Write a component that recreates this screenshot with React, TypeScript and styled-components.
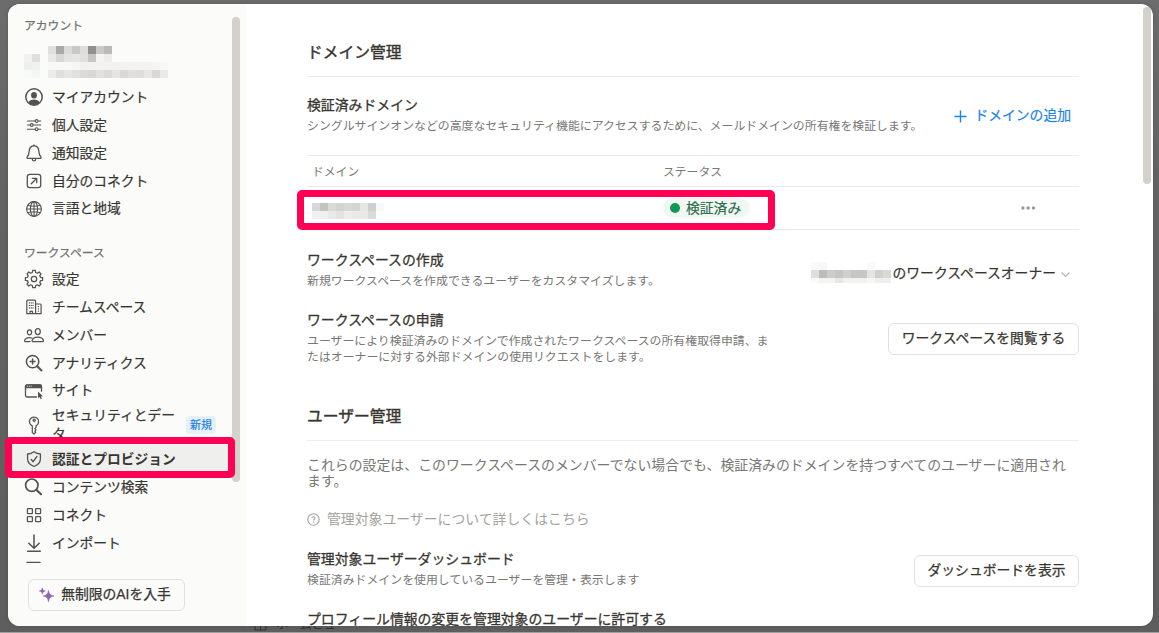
import React from 'react';
import styled, { createGlobalStyle } from 'styled-components';

const Global = createGlobalStyle`
  * { box-sizing: border-box; }
  html, body { margin: 0; height: 100%; overflow: hidden; }
  body {
    font-family: "Liberation Sans", "Noto Sans CJK JP", sans-serif;
    color: #37352f;
    background: #636363;
  }
  svg { display: block; flex: none; }
`;

const Backdrop = styled.div`
  position: relative;
  width: 1159px;
  height: 633px;
  padding: 4px 6px 6px 8px;
  overflow: hidden;
  background: linear-gradient(#6c6c6c, #636363 30%, #5e5e5e);
  border-bottom: 1px solid #a0a0a0;
`;

const Behind = styled.div`
  position: absolute;
  left: 254px;
  top: 617px;
  display: flex;
  align-items: center;
  gap: 9px;
  color: #333;
  font-size: 12px;
  line-height: 16px;
`;

const Modal = styled.div`
  position: relative;
  display: flex;
  width: 1145px;
  height: 622px;
  border-radius: 12px;
  background: #fff;
  overflow: hidden;
  box-shadow: 0 0 4px rgba(0, 0, 0, 0.15);
`;

const Sidebar = styled.aside`
  display: flex;
  flex: none;
  width: 238px;
  padding-left: 2px;
  background: #fbfbfa;
`;

const SideColumn = styled.div`
  display: flex;
  flex-direction: column;
  width: 222px;
`;

const SideScroll = styled.nav`
  display: flex;
  flex-direction: column;
  height: 559px;
  overflow: hidden;
`;

const SideHeading = styled.h2<{ $top: number }>`
  flex: none;
  margin: ${(p) => p.$top}px 0 0 14px;
  height: 18px;
  font-size: 11.8px;
  line-height: 18px;
  font-weight: 400;
  color: #73726e;
  -webkit-text-stroke: 0.25px currentColor;
`;

const Profile = styled.div`
  display: flex;
  flex: none;
  align-items: flex-end;
  gap: 8px;
  height: 43px;
  margin-left: 14px;
`;

const MosaicRow = styled.div`
  display: flex;
`;

const MosaicBlock = styled.div<{ $mt?: number }>`
  margin-top: ${(p) => p.$mt ?? 0}px;
`;

const Tile = styled.span<{ $c: string; $h?: number }>`
  width: 8px;
  height: ${(p) => p.$h ?? 8}px;
  background: ${(p) => p.$c};
`;

const Item = styled.a<{ $active?: boolean; $h?: number; $mt?: number }>`
  display: flex;
  flex: none;
  align-items: center;
  gap: 8px;
  height: ${(p) => p.$h ?? 27.9}px;
  margin-top: ${(p) => p.$mt ?? 0}px;
  padding-left: 14px;
  border-radius: 4px;
  background: ${(p) => (p.$active ? '#efefee' : 'transparent')};
  font-size: 13.75px;
  line-height: 19px;
  font-weight: ${(p) => (p.$active ? 700 : 400)};
  -webkit-text-stroke: ${(p) => (p.$active ? 0 : 0.2)}px currentColor;
`;

const IconBox = styled.span`
  display: flex;
  flex: none;
  width: 20px;
  height: 20px;
  align-items: center;
  justify-content: center;
  color: #55534e;
`;

const ItemLabel = styled.span<{ $wrap?: boolean }>`
  width: ${(p) => (p.$wrap ? '126px' : 'auto')};
  white-space: ${(p) => (p.$wrap ? 'pre-line' : 'nowrap')};
`;

const NewBadge = styled.span`
  width: 30px;
  height: 18px;
  border-radius: 4px;
  background: #e6effa;
  color: #1a83e2;
  font-size: 11px;
  line-height: 18px;
  text-align: center;
`;

const ThumbTrack = styled.div`
  padding-top: 12.5px;
`;

const Thumb = styled.div<{ $h: number }>`
  width: 8px;
  height: ${(p) => p.$h}px;
  border-radius: 4px;
  background: #d4d1cb;
`;

const Outline = styled.button<{ $w: number; $pr?: number; $mt?: number }>`
  display: flex;
  flex: none;
  align-items: center;
  justify-content: center;
  gap: 6px;
  width: ${(p) => p.$w}px;
  height: 32px;
  margin: ${(p) => p.$mt ?? 0}px 0 0;
  padding: 0 ${(p) => p.$pr ?? 0}px 0 0;
  border: 1px solid #e1e0de;
  border-radius: 6px;
  background: transparent;
  color: #37352f;
  font-family: inherit;
  font-size: 13.8px;
  line-height: 20px;
  white-space: nowrap;
  -webkit-text-stroke: 0.25px currentColor;
`;

const SideFooter = styled.div`
  padding: 16px 0 0 18px;
`;

const Main = styled.main`
  width: 772px;
  margin-left: 61px;
  flex: none;
`;

const SectionTitle = styled.h1<{ $top: number }>`
  margin: ${(p) => p.$top}px 0 0;
  height: 36px;
  border-bottom: 1px solid #ededec;
  font-size: 15.75px;
  line-height: 24px;
  font-weight: 400;
  -webkit-text-stroke: 0.4px currentColor;
`;

const Setting = styled.section<{ $top: number }>`
  display: flex;
  justify-content: space-between;
  align-items: center;
  margin-top: ${(p) => p.$top}px;
`;

const SettingTitle = styled.h3`
  margin: 0;
  font-size: 13.86px;
  line-height: 18px;
  font-weight: 400;
  white-space: nowrap;
  -webkit-text-stroke: 0.28px currentColor;
`;

const SettingNote = styled.p`
  margin: 4px 0 0;
  font-size: 11.9px;
  line-height: 16px;
  color: #787774;
  white-space: pre;
`;

const AddDomain = styled.button`
  display: flex;
  align-items: center;
  gap: 7px;
  padding: 2px 0 0;
  margin-right: 8px;
  border: 0;
  background: none;
  color: #1a84ea;
  font-family: inherit;
  font-size: 13.8px;
  line-height: 20px;
  white-space: nowrap;
  -webkit-text-stroke: 0.2px currentColor;
`;

const Table = styled.div`
  margin-top: 21px;
  border-top: 1px solid #ededec;
`;

const TableRow = styled.div<{ $h: number; $pb?: number }>`
  display: grid;
  grid-template-columns: 351px 356px 1fr;
  align-items: center;
  height: ${(p) => p.$h}px;
  padding: 0 0 ${(p) => p.$pb ?? 0}px 5px;
  border-bottom: 1px solid #e9e9e7;
  font-size: 11.8px;
  color: #787774;
`;

const Status = styled.span`
  display: flex;
  align-items: center;
  gap: 6px;
  width: 87px;
  height: 20px;
  padding-left: 7px;
  border-radius: 10px;
  background: #f1f8f4;
  color: #2f6b4c;
  font-size: 13.8px;
  line-height: 20px;
  -webkit-text-stroke: 0.2px currentColor;
`;

const StatusLabel = styled.span`
  padding-top: 1px;
`;

const Dot = styled.i`
  width: 10px;
  height: 10px;
  border-radius: 50%;
  background: #109a57;
`;

const Select = styled.div`
  display: flex;
  align-items: center;
  margin-right: 9px;
  padding-top: 7px;
  font-size: 13.8px;
  line-height: 20px;
  -webkit-text-stroke: 0.2px currentColor;
`;

const SelectLabel = styled.span`
  margin-left: 2px;
`;

const Paragraph = styled.p`
  margin: 16px 0 0;
  font-size: 13.9px;
  line-height: 16px;
  color: #787774;
  white-space: pre;
`;

const HelpLink = styled.a`
  display: flex;
  align-items: center;
  gap: 7px;
  margin-top: 20px;
  font-size: 13.86px;
  line-height: 20px;
  color: #a3a29f;
`;

const MainThumb = styled.div`
  margin: 3px 0 0 63.5px;
`;

const Marker = styled.div<{ $x: number; $y: number; $w: number; $h: number }>`
  position: absolute;
  left: ${(p) => p.$x}px;
  top: ${(p) => p.$y}px;
  width: ${(p) => p.$w}px;
  height: ${(p) => p.$h}px;
  border: 7px solid #ff0055;
  border-radius: 5px;
`;

const Svg = ({ children, size = 20, sw = 1.3 }: { children: React.ReactNode; size?: number; sw?: number }) => (
  <svg width={size} height={size} viewBox={`0 0 ${size} ${size}`} fill="none" stroke="currentColor" strokeWidth={sw} strokeLinecap="round" strokeLinejoin="round">
    {children}
  </svg>
);

const gearPath = (() => {
  const pts: string[] = [];
  const teeth = 8;
  for (let i = 0; i < teeth; i++) {
    const base = (i / teeth) * Math.PI * 2 - Math.PI / 2;
    [[-0.25, 6.7], [-0.15, 8.7], [0.15, 8.7], [0.25, 6.7]].forEach(([a, r]) => {
      pts.push(`${(10 + Math.cos(base + a) * r).toFixed(2)} ${(10 + Math.sin(base + a) * r).toFixed(2)}`);
    });
  }
  return `M${pts.join('L')}Z`;
})();

const icons: Record<string, React.ReactNode> = {
  account: (
    <Svg sw={1.5}>
      <circle cx="10" cy="10" r="8.2" />
      <ellipse cx="10" cy="8.2" rx="2.9" ry="3.3" fill="currentColor" stroke="none" />
      <path d="M4.4 15.3c1-1.9 3.2-2.7 5.6-2.7s4.6.8 5.6 2.7c-1.4 1.7-3.4 2.7-5.6 2.7s-4.2-1-5.6-2.7z" fill="currentColor" stroke="none" />
    </Svg>
  ),
  sliders: (
    <Svg sw={1.1}>
      <path d="M3.4 6h7.6M14.2 6h2.6M3.4 10h2.7M9.3 10h7.5M3.4 14.2h7.6M14.2 14.2h2.6" />
      <circle cx="12.6" cy="6" r="1.4" />
      <circle cx="7.7" cy="10" r="1.4" />
      <circle cx="12.6" cy="14.2" r="1.4" />
    </Svg>
  ),
  bell: (
    <Svg>
      <path d="M10 2.8c-3.2 0-4.7 2.3-4.8 5.3-.1 3.4-.9 4.6-2.1 6.1-.4.6-.1 1.2.6 1.2h12.6c.7 0 1-.6.6-1.2-1.2-1.5-2-2.7-2.1-6.1-.1-3-1.6-5.3-4.8-5.3z" />
      <path d="M8.3 16.2c.1 1 .8 1.6 1.7 1.6s1.6-.6 1.7-1.6M10 1.9v.6" />
    </Svg>
  ),
  connect: (
    <Svg>
      <rect x="3.3" y="3.3" width="13.4" height="13.4" rx="2.4" />
      <path d="M7.3 12.7l5.2-5.2M8.3 7.3h4.4v4.4" />
    </Svg>
  ),
  globe: (
    <Svg sw={1.1}>
      <circle cx="10" cy="10" r="7.4" />
      <ellipse cx="10" cy="10" rx="3.6" ry="7.4" />
      <path d="M10 2.6v14.8M2.6 10h14.8M3.8 6.3c3.4 1 9 1 12.4 0M3.8 13.7c3.4-1 9-1 12.4 0" />
    </Svg>
  ),
  gear: (
    <Svg>
      <path d={gearPath} />
      <circle cx="10" cy="10" r="2.7" />
    </Svg>
  ),
  building: (
    <Svg sw={1.2}>
      <path d="M2.8 16.7V4.2c0-.6.4-1 1-1h6.8c.6 0 1 .4 1 1v12.5zM11.6 7h4.6c.5 0 .9.4.9.9v8.8h-5.5M6 16.5v-2.2h2.5v2.2" />
      <path d="M5.4 5.9h.2M7.2 5.9h.2M9 5.9h.2M5.4 8.4h.2M7.2 8.4h.2M9 8.4h.2M5.4 10.9h.2M7.2 10.9h.2M9 10.9h.2M14.3 9.6h.2M14.3 11.9h.2M14.3 14.2h.2" />
    </Svg>
  ),
  people: (
    <Svg sw={1.25}>
      <ellipse cx="13.8" cy="6.6" rx="2.5" ry="3" />
      <path d="M8.7 16.5c-.5 0-.7-.4-.6-.9.5-2.2 2.9-3.6 5.7-3.6s5.2 1.4 5.7 3.6c.1.5-.1.9-.6.9z" />
      <ellipse cx="5.5" cy="7.3" rx="2.1" ry="2.5" />
      <path d="M6 16.5H1.1c-.4 0-.6-.4-.5-.8.4-1.9 2.4-3.2 4.9-3.2.9 0 1.7.2 2.4.5" />
    </Svg>
  ),
  analytics: (
    <Svg sw={1.5}>
      <circle cx="8.6" cy="8.6" r="6.2" />
      <path d="M8.6 6.1v5M6.1 8.6h5" />
      <path d="M13.3 13.3l4.2 4.2" strokeWidth="2" />
    </Svg>
  ),
  site: (
    <Svg>
      <path d="M12.5 16H3.2c-1 0-1.7-.7-1.7-1.7V5.7c0-1 .7-1.7 1.7-1.7h12.6c1 0 1.7.7 1.7 1.7v4.5" />
      <path d="M1.5 5.7C1.5 4.7 2.2 4 3.2 4h12.6c1 0 1.7.7 1.7 1.7v.9h-16z" fill="currentColor" />
      <path d="M3.3 5.2h.1M5.2 5.2h.1M7.1 5.2h.1" stroke="#fff" strokeWidth="1" />
      <path d="M14 10.5v6.8l1.6-1.4 1 2.2 1.3-.6-1-2.1 2.1-.2z" fill="currentColor" stroke="none" />
    </Svg>
  ),
  key: (
    <Svg sw={1.25}>
      <path d="M8.3 10.9a4.6 4.6 0 1 1 3.7-.1v1.5l-1.2 1.3 1.2 1.3-1.1 1.3.8 1.1-1.7 1.8-1.7-1.6z" />
      <circle cx="10.2" cy="5.2" r="1.1" />
    </Svg>
  ),
  shield: (
    <Svg>
      <path d="M10 2.7c1.9 1.4 4 2.1 6.4 2.3v5c0 3.4-2.4 5.9-6.4 7.5-4-1.6-6.4-4.1-6.4-7.5V5C6 4.800 8.100 4.100 10 2.700z" />
      <path d="M7.2 10.5l2 2.2 3.7-5.2" />
    </Svg>
  ),
  search: (
    <Svg sw={1.7}>
      <circle cx="7.8" cy="8.2" r="6.2" />
      <path d="M12.5 13l4.5 4.2" strokeWidth="2.2" />
    </Svg>
  ),
  grid: (
    <Svg>
      <rect x="3.4" y="3.7" width="5" height="5" rx=".8" />
      <rect x="11.6" y="3.7" width="5" height="5" rx=".8" />
      <rect x="3.4" y="11.7" width="5" height="5" rx=".8" />
      <rect x="11.6" y="11.7" width="5" height="5" rx=".8" />
    </Svg>
  ),
  download: (
    <Svg sw={1.5}>
      <path d="M10 2v13M4.8 10.2l5.2 5 5.2-5M3.7 18.3h12.6" />
    </Svg>
  ),
};

type Entry = { icon: string; label: string };

const accountItems: Entry[] = [
  { icon: 'account', label: 'マイアカウント' },
  { icon: 'sliders', label: '個人設定' },
  { icon: 'bell', label: '通知設定' },
  { icon: 'connect', label: '自分のコネクト' },
  { icon: 'globe', label: '言語と地域' },
];

const workspaceItems: Entry[] = [
  { icon: 'gear', label: '設定' },
  { icon: 'building', label: 'チームスペース' },
  { icon: 'people', label: 'メンバー' },
  { icon: 'analytics', label: 'アナリティクス' },
  { icon: 'site', label: 'サイト' },
];

const lowerItems: Entry[] = [
  { icon: 'search', label: 'コンテンツ検索' },
  { icon: 'grid', label: 'コネクト' },
  { icon: 'download', label: 'インポート' },
];

const Mosaic = ({ rows, mt, heights }: { rows: string[][]; mt?: number; heights?: number[] }) => (
  <MosaicBlock $mt={mt}>
    {rows.map((row, r) => (
      <MosaicRow key={r}>
        {row.map((c, i) => (
          <Tile key={i} $c={c} $h={heights?.[r]} />
        ))}
      </MosaicRow>
    ))}
  </MosaicBlock>
);

const NavList = ({ items, gap = 0 }: { items: Entry[]; gap?: number }) => (
  <>
    {items.map((it, i) => (
      <Item key={it.label} $mt={i === 0 ? gap : 0}>
        <IconBox>{icons[it.icon]}</IconBox>
        <ItemLabel>{it.label}</ItemLabel>
      </Item>
    ))}
  </>
);

export default function App() {
  return (
    <>
      <Global />
      <Backdrop>
        <Behind>
          <svg width="13" height="12" viewBox="0 0 13 12" fill="none" stroke="currentColor">
            <path d="M1 1h11v10H1zM1 6h11M6.5 1v10" />
          </svg>
          ホームビュー
        </Behind>
        <Modal>
          <Sidebar>
            <SideColumn>
              <SideScroll>
                <SideHeading $top={13}>アカウント</SideHeading>
                <Profile>
                  <Mosaic
                    rows={[
                      ['#f1f1f1', '#dfdfdf'],
                      ['#eceef0', '#eff1f3'],
                      ['#f9f9f8', '#f5f5f4'],
                    ]}
                  />
                  <Mosaic
                    rows={[
                      ['#dfdfdf', '#a9a9a8', '#dbdbda', '#c8c8c7', '#dedddc', '#90908f', '#c9c9c8', '#b9b9b8'],
                      ['#e9e9e9', '#d8d8d7', '#e4e4e3', '#e6e6e5', '#dfdfde', '#c6c6c5', '#f5f4f3', '#ececeb'],
                      ['#f8f8f7', '#f8f8f7', '#f8f8f7', '#f5f5f4', '#f1f1f0', '#f1f1f0', '#f2f2f1', '#f2f2f1', '#f1f1f0', '#f2f2f1', '#f2f2f1', '#f2f2f1', '#f3f3f2', '#f4f4f3', '#f8f8f7'],
                      ['#ececeb', '#dfdfde', '#e6e6e5', '#e2dfde', '#dcdbda', '#d7d7d6', '#e0e0df', '#dcdbda', '#e4e4e3', '#dad9d8', '#e0dfde', '#dedddc', '#e8e7e6', '#d9d8d7', '#eaeae9'],
                    ]}
                  />
                </Profile>
                <NavList items={accountItems} gap={5.45} />
                <SideHeading $top={21}>ワークスペース</SideHeading>
                <NavList items={workspaceItems} gap={3.5} />
                <Item $h={40.55}>
                  <IconBox>{icons.key}</IconBox>
                  <ItemLabel $wrap>{'セキュリティとデー\nタ'}</ItemLabel>
                  <NewBadge>新規</NewBadge>
                </Item>
                <Item $active>
                  <IconBox>{icons.shield}</IconBox>
                  <ItemLabel>認証とプロビジョン</ItemLabel>
                </Item>
                <NavList items={lowerItems} />
                <Item $h={20} $mt={4}>
                  <IconBox>
                    <Svg>
                      <path d="M3 1.5h13v16H3z" />
                    </Svg>
                  </IconBox>
                </Item>
              </SideScroll>
              <SideFooter>
                <Outline $w={157} $pr={4}>
                  <svg width="17" height="17" viewBox="0 0 17 17" fill="#9065b0">
                    <path d="M10.5 3.5c.7 3.7 1.5 4.6 5.3 5.5-3.8.9-4.6 1.8-5.3 5.7-.8-3.9-1.6-4.8-5.3-5.7 3.7-.9 4.5-1.8 5.3-5.5z" stroke="#9065b0" strokeWidth=".7" />
                    <path d="M4.3.8c.4 2.2.9 2.7 3.1 3.2-2.2.5-2.7 1-3.1 3.2C3.9 5 3.4 4.5 1.2 4c2.2-.5 2.7-1 3.1-3.2z" stroke="#9065b0" strokeWidth=".5" />
                  </svg>
                  無制限のAIを入手
                </Outline>
              </SideFooter>
            </SideColumn>
            <ThumbTrack>
              <Thumb $h={465} />
            </ThumbTrack>
          </Sidebar>
          <Main>
            <SectionTitle $top={37}>ドメイン管理</SectionTitle>
            <Setting $top={19}>
              <div>
                <SettingTitle>検証済みドメイン</SettingTitle>
                <SettingNote>シングルサインオンなどの高度なセキュリティ機能にアクセスするために、メールドメインの所有権を検証します。</SettingNote>
              </div>
              <AddDomain>
                <svg width="13" height="13" viewBox="0 0 13 13" stroke="currentColor" strokeWidth="1.4">
                  <path d="M6.5 .5v12M.5 6.5h12" />
                </svg>
                ドメインの追加
              </AddDomain>
            </Setting>
            <Table>
              <TableRow $h={31} $pb={1}>
                <span>ドメイン</span>
                <span>ステータス</span>
              </TableRow>
              <TableRow $h={43}>
                <Mosaic
                  mt={6}
                  rows={[
                    ['#d8d8d7', '#c2c2c0', '#dadad9', '#d3d3d2', '#d8d8d7', '#d5d5d4', '#e6e6e5', '#cfcfce', '#f8f8f8'],
                    ['#f0f1f1', '#eeefef', '#e9e9e9', '#e3e3e2', '#ededec', '#e9e9e8', '#e9e9e8', '#dadad9'],
                  ]}
                />
                <Status>
                  <Dot />
                  <StatusLabel>検証済み</StatusLabel>
                </Status>
                <svg width="18" height="6" viewBox="0 0 18 6" fill="#9b9a97">
                  <circle cx="3.9" cy="3" r="1.7" />
                  <circle cx="9.2" cy="3" r="1.7" />
                  <circle cx="14.5" cy="3" r="1.7" />
                </svg>
              </TableRow>
            </Table>
            <Setting $top={21}>
              <div>
                <SettingTitle>ワークスペースの作成</SettingTitle>
                <SettingNote>新規ワークスペースを作成できるユーザーをカスタマイズします。</SettingNote>
              </div>
              <Select>
                <Mosaic
                  mt={-2}
                  heights={[8, 8, 5]}
                  rows={[
                    ['#f9f9f9', '#f7f7f7', '#fff', '#fff', '#fff', '#fff', '#fff', '#fafafa', '#fff', '#fff'],
                    ['#dedede', '#bcbcbb', '#cccccb', '#c5c5c4', '#cfcfce', '#c6c6c5', '#c6c6c5', '#e4e4e3', '#d0d0cf', '#d8d8d7'],
                    ['#f9f9f9', '#f4f4f4', '#f4f4f4', '#e7e7e6', '#f1f1f0', '#f2f2f1', '#f1f1f0', '#f7f7f7', '#eeeeed', '#efefee'],
                  ]}
                />
                <SelectLabel>のワークスペースオーナー</SelectLabel>
                <svg width="14" height="10" viewBox="0 0 14 10" fill="none" stroke="#b5b4b1" strokeWidth="1.1">
                  <path d="M5.5 3.5l4 4 4-4" />
                </svg>
              </Select>
            </Setting>
            <Setting $top={22}>
              <div>
                <SettingTitle>ワークスペースの申請</SettingTitle>
                <SettingNote>{'ユーザーにより検証済みのドメインで作成されたワークスペースの所有権取得申請、ま\nたはオーナーに対する外部ドメインの使用リクエストをします。'}</SettingNote>
              </div>
              <Outline $w={191} $mt={2}>ワークスペースを閲覧する</Outline>
            </Setting>
            <SectionTitle $top={40}>ユーザー管理</SectionTitle>
            <Paragraph>{'これらの設定は、このワークスペースのメンバーでない場合でも、検証済みのドメインを持つすべてのユーザーに適用され\nます。'}</Paragraph>
            <HelpLink>
              <svg width="13" height="13" viewBox="0 0 13 13" fill="none" stroke="currentColor" strokeWidth="1.1">
                <circle cx="6.5" cy="6.5" r="5.7" />
                <path d="M4.9 5.3c0-1 .7-1.6 1.6-1.6s1.6.6 1.6 1.4c0 1.2-1.5 1.2-1.5 2.4M6.6 8.6v1" />
              </svg>
              管理対象ユーザーについて詳しくはこちら
            </HelpLink>
            <Setting $top={21}>
              <div>
                <SettingTitle>管理対象ユーザーダッシュボード</SettingTitle>
                <SettingNote>検証済みドメインを使用しているユーザーを管理・表示します</SettingNote>
              </div>
              <Outline $w={165} $mt={3}>ダッシュボードを表示</Outline>
            </Setting>
            <Setting $top={22}>
              <SettingTitle>プロフィール情報の変更を管理対象のユーザーに許可する</SettingTitle>
            </Setting>
          </Main>
          <MainThumb>
            <Thumb $h={177} />
          </MainThumb>
        </Modal>
        <Marker $x={5} $y={437} $w={230} $h={41} />
        <Marker $x={297} $y={190} $w={478} $h={40} />
      </Backdrop>
    </>
  );
}
